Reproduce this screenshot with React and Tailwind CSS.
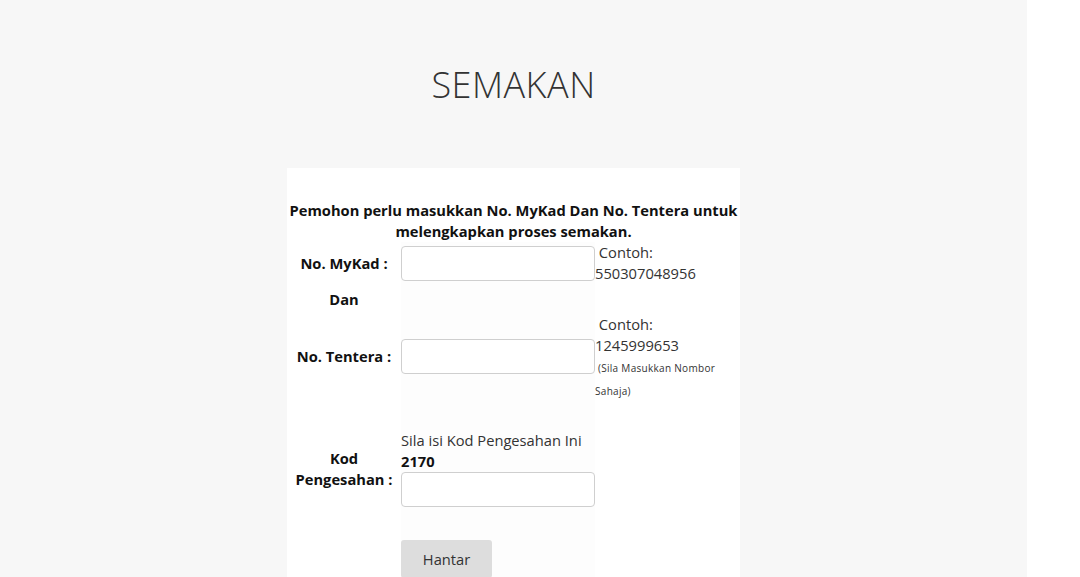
import React from 'react'

const font = { fontFamily: '"Open Sans", "Liberation Sans", sans-serif' }

const Field = () => (
  <input
    type="text"
    className="block w-[194px] h-[35px] bg-white border border-[#cfcfcf] rounded-[4px] outline-none"
  />
)

export default function App() {
  return (
    <div className="min-h-[577px] bg-white text-[#333]" style={font}>
      <div className="w-[1027px] min-h-[577px] bg-[#f7f7f7] flex flex-col items-center pt-[60px]">
        <h1 className="text-[36px] leading-[50px] font-light tracking-[0.5px] text-[#333]">SEMAKAN</h1>

        <div className="mt-[58px] w-[453px] bg-white pt-[32px] pb-[20px] text-[14.7px] leading-[21px]">
          <p className="font-bold text-center text-[#111]">
            Pemohon perlu masukkan No. MyKad Dan No. Tentera untuk melengkapkan proses semakan.
          </p>

          <div className="grid grid-cols-[114px_194px_145px]">
            {/* MyKad */}
            <div className="h-[42px] flex items-center justify-center font-bold text-[#111]">No. MyKad :</div>
            <div className="h-[42px] flex items-center bg-[#fdfdfd]"><Field /></div>
            <div className="h-[42px]">&nbsp;Contoh:<br />550307048956</div>

            {/* Dan */}
            <div className="h-[30px] flex items-center justify-center font-bold text-[#111]">Dan</div>
            <div className="h-[30px] bg-[#fdfdfd]" />
            <div className="h-[30px]" />

            {/* Tentera */}
            <div className="h-[84px] flex items-center justify-center font-bold text-[#111]">No. Tentera :</div>
            <div className="h-[84px] flex items-center bg-[#fdfdfd]"><Field /></div>
            <div className="h-[84px]">
              &nbsp;Contoh:<br />1245999653<br />
              <span className="text-[10px] tracking-[0.3px]">&nbsp;(Sila Masukkan Nombor Sahaja)</span>
            </div>

            {/* spacer */}
            <div className="h-[32px]" />
            <div className="h-[32px] bg-[#fdfdfd]" />
            <div className="h-[32px]" />

            {/* Kod */}
            <div className="h-[77px] flex items-center justify-center text-center font-bold text-[#111]">
              Kod<br />Pengesahan :
            </div>
            <div className="h-[77px] bg-[#fdfdfd]">
              <div>Sila isi Kod Pengesahan Ini</div>
              <div className="font-bold text-[#111]">2170</div>
              <Field />
            </div>
            <div className="h-[77px]" />

            {/* spacer */}
            <div className="h-[33px]" />
            <div className="h-[33px] bg-[#fdfdfd]" />
            <div className="h-[33px]" />

            {/* submit */}
            <div />
            <div className="bg-[#fdfdfd]">
              <button
                type="button"
                className="w-[91px] h-[38px] bg-[#dddddd] rounded-[3px] text-[14.7px] text-[#333]"
                style={font}
              >
                Hantar
              </button>
            </div>
            <div />
          </div>
        </div>
      </div>
    </div>
  )
}
